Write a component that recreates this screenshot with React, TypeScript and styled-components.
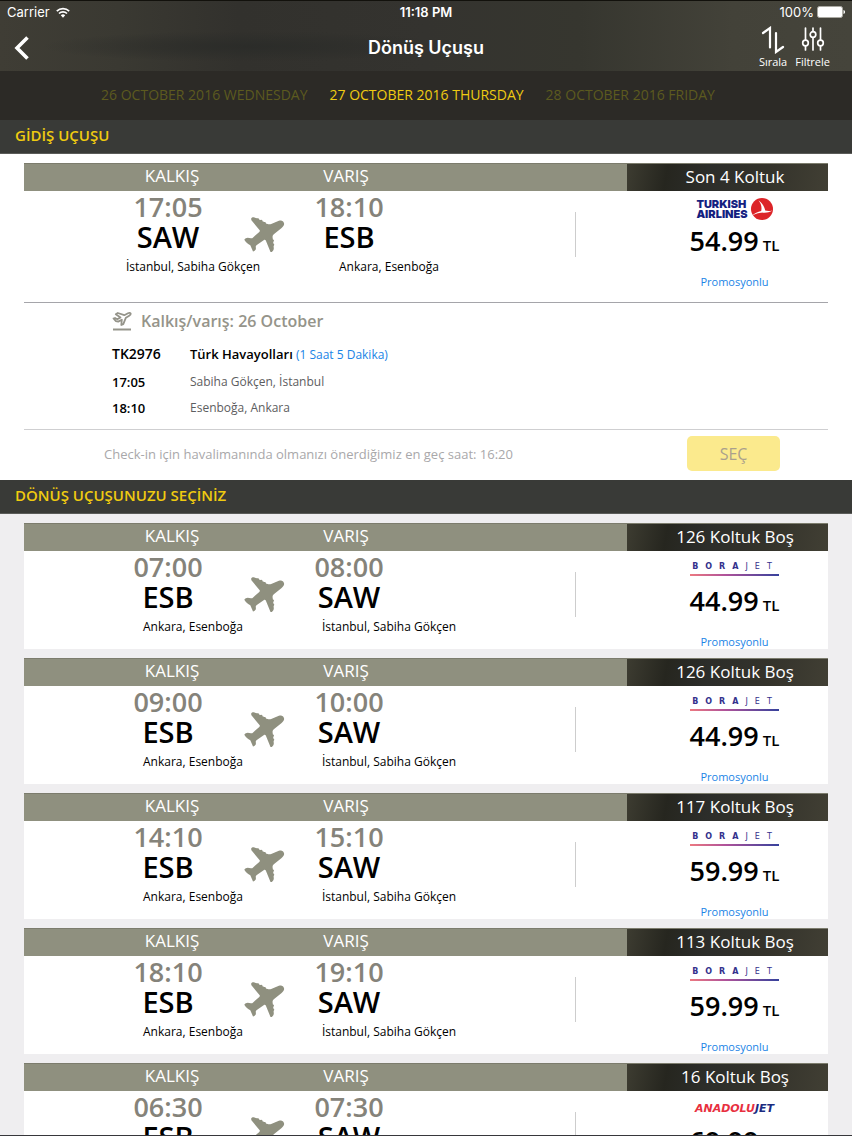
import React from 'react';
import styled, { createGlobalStyle } from 'styled-components';

const GlobalStyle = createGlobalStyle`
  *, *::before, *::after { box-sizing: border-box; }
  body {
    margin: 0;
    overflow: hidden;
    font-family: 'Open Sans', 'Noto Sans', sans-serif;
    font-size: 12px;
    line-height: 20px;
    color: #000;
  }
  button { font: inherit; color: inherit; border: 0; padding: 0; background: none; cursor: pointer; }
  h1, h2, h3, p, ul { margin: 0; padding: 0; font: inherit; }
  ul { list-style: none; }
  a { text-decoration: none; }
`;

const Screen = styled.div`
  display: flex;
  flex-direction: column;
  height: 100vh;
  background: #efeef0;
  border-bottom: 1px solid #37373b;
`;

const TopBar = styled.header`
  flex: none;
  height: 71px;
  color: #fff;
  border-top: 1px solid #12110c;
  background:
    radial-gradient(ellipse at 29% 65%, #2b2c29 0%, rgba(43, 44, 41, 0) 24%),
    linear-gradient(90deg, #3f3d35 0%, #3a3932 14%, #32312d 28%, #34332f 50%, #36362f 68%, #434239 86%, #45443b 100%);
`;

const StatusBar = styled.div`
  display: grid;
  grid-template-columns: 1fr auto 1fr;
  align-items: center;
  height: 22px;
  padding: 0 7px;
  font: 400 13px/22px Inter, sans-serif;
`;

const StatusGroup = styled.div<{ $end?: boolean }>`
  display: flex;
  align-items: center;
  justify-content: ${(p) => (p.$end ? 'flex-end' : 'flex-start')};
  gap: ${(p) => (p.$end ? 3 : 6)}px;
`;

const Clock = styled.div`
  font-weight: 600;
`;

const NavRow = styled.div`
  display: grid;
  grid-template-columns: 1fr auto 1fr;
  align-items: center;
  height: 48px;
  padding: 2px 14px 0;
`;

const BackButton = styled.button`
  justify-self: start;
  display: flex;
`;

const Title = styled.h1`
  font: 600 18px/24px Inter, sans-serif;
`;

const Tools = styled.div`
  justify-self: end;
  display: flex;
  gap: 8px;
  margin-right: 8px;
`;

const ToolButton = styled.button`
  display: flex;
  flex-direction: column;
  align-items: center;
  font-size: 11px;
  line-height: 16px;

  svg { height: 28px; }
`;

const DateTabs = styled.nav`
  flex: none;
  display: flex;
  justify-content: center;
  align-items: center;
  gap: 22px;
  height: 49px;
  padding: 0 36px 2px 0;
  background: #2c2a26;
`;

const DateTab = styled.button<{ $active?: boolean }>`
  font-size: 14px;
  white-space: nowrap;
  color: ${(p) => (p.$active ? '#efcb12' : '#5c5a1f')};
`;

const SectionTitle = styled.h2`
  flex: none;
  height: 34px;
  padding: 0 15px;
  font-size: 15px;
  font-weight: 600;
  line-height: 30px;
  color: #f0cb10;
  background: #393a37;
  border-bottom: 1px solid #5a5b58;
`;

const Selected = styled.section`
  flex: none;
  padding: 9px 24px 0;
  background: #fff;
`;

const List = styled.ul`
  flex: 1;
  min-height: 0;
  display: flex;
  flex-direction: column;
  gap: 9px;
  padding: 9px 24px;
  overflow-y: auto;
  scrollbar-width: none;
`;

const Card = styled.article`
  flex: none;
  background: #fff;
`;

const CardHeader = styled.div`
  display: grid;
  grid-template-columns: 3fr 1fr;
  height: 28px;
  line-height: 25px;
  color: #fff;
  background: #8f907f;
  border-top: 1px solid #7c7c6d;
`;

const Headings = styled.div`
  display: grid;
  grid-template-columns: 61fr 174fr 174fr 194fr;
  font-size: 17px;
  line-height: 24px;
  text-align: center;
`;

const Heading = styled.h3<{ $column: number }>`
  grid-column: ${(p) => p.$column};
`;

const Seats = styled.div`
  padding-left: 15px;
  font-size: 17px;
  text-align: center;
  background: linear-gradient(100deg, #3d3c31 0%, #26261f 20%, #2c2d2a 40%, #34332b 70%, #413f34 100%);
`;

const CardBody = styled.div<{ $tall?: boolean }>`
  display: grid;
  grid-template-columns: 551fr 253fr;
  height: ${(p) => (p.$tall ? 111 : 98)}px;
`;

const Route = styled.div``;

const TimesRow = styled.div`
  display: grid;
  grid-template-columns: 96fr 96fr 96fr 74fr 189fr;
  height: 62px;
  justify-items: center;
`;

const Stop = styled.div<{ $column: number }>`
  grid-column: ${(p) => p.$column};
  display: flex;
  flex-direction: column;
  align-items: center;
  white-space: nowrap;
`;

const Time = styled.time`
  font-size: 27px;
  font-weight: 600;
  line-height: 32px;
  color: #85837a;
`;

const Code = styled.strong`
  font-size: 29px;
  font-weight: 600;
  line-height: 28px;
`;

const PlaneCell = styled.div`
  grid-column: 3;
  align-self: end;
  display: flex;
`;

const CitiesRow = styled.div`
  display: grid;
  grid-template-columns: 71fr 196fr 196fr 88fr;
  padding-top: 4px;
  text-align: center;
`;

const City = styled.p<{ $column: number }>`
  grid-column: ${(p) => p.$column};
`;

const Fare = styled.div`
  display: flex;
  flex-direction: column;
  align-items: center;
  padding-left: 66px;
  background: linear-gradient(#cdcdcd, #cdcdcd) 0 21px / 1px 45px no-repeat;
`;

const Logo = styled.div`
  display: flex;
  align-items: center;
  justify-content: center;
  gap: 3px;
  height: 35px;
`;

const Price = styled.div`
  font-size: 27px;
  font-weight: 600;
  line-height: 30px;
  white-space: nowrap;
`;

const Currency = styled.span`
  margin-left: 4px;
  font-size: 15px;
`;

const FareLink = styled.a`
  margin-top: 14px;
  font-size: 11px;
  line-height: 16px;
  color: #1a84e6;
`;

const TurkishName = styled.span`
  font: 900 11px/10px Inter, sans-serif;
  color: #14217f;
`;

const BoraName = styled.span`
  padding: 0 0 3px 2px;
  font: 700 8px/9px 'DejaVu Sans', sans-serif;
  letter-spacing: 7px;
  color: #34318c;
  border-bottom: 2px solid;
  border-image: linear-gradient(90deg, #ee7a80, #b0539a 40%, #34419c) 1;
`;

const BoraLight = styled.span`
  font-weight: 400;
`;

const AnadoluName = styled.span`
  font: italic 700 11px/12px 'DejaVu Sans', sans-serif;
  color: #e8303f;
`;

const AnadoluJet = styled.span`
  color: #1b2b80;
`;

const Details = styled.div`
  padding: 6px 88px 8px;
  border-top: 1px solid #a5a5aa;
`;

const DetailsTitle = styled.h3`
  display: flex;
  align-items: center;
  gap: 8px;
  height: 24px;
  font-size: 16px;
  font-weight: 600;
  color: #95948a;
`;

const Legs = styled.dl`
  display: grid;
  grid-template-columns: 78px 1fr;
  grid-template-rows: 30px 26px 26px;
  align-items: center;
  margin: 6px 0 0;
`;

const Term = styled.dt<{ $large?: boolean }>`
  font-size: ${(p) => (p.$large ? 14 : 13)}px;
  font-weight: 600;
`;

const Info = styled.dd`
  margin: 0;
  color: #5d5d60;
`;

const Carrier = styled.strong`
  font-size: 13px;
  font-weight: 600;
  color: #000;
`;

const Duration = styled.span`
  color: #1a84e6;
`;

const CheckIn = styled.div`
  display: flex;
  align-items: center;
  justify-content: space-between;
  height: 51px;
  padding: 0 48px 3px 80px;
  font-size: 13px;
  color: #a9a8aa;
  border-top: 1px solid #cfcfd1;
`;

const SelectButton = styled.button`
  width: 93px;
  height: 35px;
  font-size: 16px;
  color: #aaa08c;
  background: #fbea8d;
  border-radius: 5px;
`;

const Plane = () => (
  <svg width="42" height="36" viewBox="0 0 42 36" fill="#8f907f" aria-hidden="true">
    <path d="M41 6.2c.6 1.600-.8 3.500-2.400 4.700l-7.800 6.300c-1.100 1-1.300 1.900-1.200 3.200l.3 2.200c.9.200 1.400.8.900 1.700l-.6.600.2 1.700c.8.400 1.100 1.100.6 1.800l-.4.500.2 2.700c0 1.600-1 2.700-2 3.400h-1.300l-4.700-11.500c-.4-.8-1.100-.9-1.800-.4l-7.200 4.800c-.9.700-1.100 1.100-1 2l.1 2.300c-.7 1.200-1.700 1.900-2.900 2.300l-2.700-6.200c-2.300-1.200-4.600-3-6-5.600 1-1.200 2.100-1.800 3.400-1.900l3.200.4c.9.100 1.300 0 2.200-.8l6.200-5.500c.7-.6.8-1.300.2-1.900L8.400 3.300l-.3-1.600C8.700.7 9.500.2 10.700.3l3.200 1 .9-.1c.8 0 1.200.5 1.200 1.200l1.600.5.8-.1c.9.100 1.100.6 1.100 1.400l1.800.8.700-.1c.8.200 1.100.8.900 1.600l2.500.7c1.200.3 1.800.2 2.800-.3l7.700-3.100c2-.8 4.500-.6 5.100 2.400z" />
  </svg>
);

const TakeOff = () => (
  <svg width="21" height="20" viewBox="0 0 21 20" fill="none" stroke="#95948a" strokeWidth="1.800" strokeLinejoin="round" strokeLinecap="round" aria-hidden="true">
    <path d="M1.500 7.500 3 7l2.300 1.300L8.500 6.500 3.800 3.300 5.800 2l6.500 2.200 3.700-2c1.300-.6 2.500-.3 2.700.4.200.8-.5 1.500-1.500 2.100l-3.300 2-2.600 6.400-2 .9.500-5.300-3.600 1.900-2.300-.5z" />
    <path d="M1 18.500h18" strokeWidth="2" strokeLinecap="butt" />
  </svg>
);

const Wifi = () => (
  <svg width="14" height="11" viewBox="0 0 14 11" fill="none" stroke="#fff" strokeWidth="1.700" aria-hidden="true">
    <path d="M.8 4.100a9 9 0 0 1 12.400 0M3 6.500a5.800 5.800 0 0 1 8 0" />
    <path d="M4.800 8.200a3.200 3.200 0 0 1 4.400 0L7 10.700z" fill="#fff" stroke="none" />
  </svg>
);

const Battery = () => (
  <svg width="28" height="12" viewBox="0 0 28 12" aria-hidden="true">
    <rect x=".5" y=".5" width="25" height="11" rx="2" fill="#fff" stroke="#aaa9a2" />
    <path d="M26.500 4v4c1-.3 1.500-1 1.500-2s-.5-1.700-1.500-2z" fill="#fff" />
  </svg>
);

const BackIcon = () => (
  <svg width="16" height="24" viewBox="0 0 16 24" fill="none" stroke="#fff" strokeWidth="3.600" aria-hidden="true">
    <path d="M13.500 1.500 3 12l10.500 10.500" />
  </svg>
);

const SortIcon = () => (
  <svg width="24" height="28" viewBox="0 0 24 28" fill="none" stroke="#fff" strokeWidth="2.200" strokeLinecap="round" aria-hidden="true">
    <path d="M2 7 9 2v19.500" />
    <path d="M15 7v19l7-5" />
  </svg>
);

const FilterIcon = () => (
  <svg width="24" height="28" viewBox="0 0 24 28" fill="none" stroke="#fff" strokeWidth="1.700" strokeLinecap="round" aria-hidden="true">
    <path d="M4.500 2v12M4.500 20v4M12 2v3.500M12 11.500V24M19.500 2v12M19.500 20v4" />
    <circle cx="4.500" cy="17" r="2.800" />
    <circle cx="12" cy="8.500" r="2.800" />
    <circle cx="19.500" cy="17" r="2.800" />
  </svg>
);

const TurkishMark = () => (
  <svg width="22" height="22" viewBox="0 0 22 22" aria-hidden="true">
    <circle cx="11" cy="11" r="11" fill="#dc2428" />
    <path d="M7.500 2.300c3.600 2.700 6 6.200 6.700 10.300 2.500.6 4.700.6 7-.2-1.200.9-3.200 1.700-5.400 2-5.200.4-10.200.6-14.600 3.200 2.300-2.500 5.600-3.900 9-4.700C11.100 9 10 5.600 7.500 2.300z" fill="#fff" />
  </svg>
);

type Airline = 'turkish' | 'bora' | 'anadolu';

const AirlineLogo = ({ airline }: { airline: Airline }) => (
  <Logo>
    {airline === 'turkish' && (
      <>
        <TurkishName>
          TURKISH
          <br />
          AIRLINES
        </TurkishName>
        <TurkishMark />
      </>
    )}
    {airline === 'bora' && (
      <BoraName>
        BORA<BoraLight>JET</BoraLight>
      </BoraName>
    )}
    {airline === 'anadolu' && (
      <AnadoluName>
        ANADOLU<AnadoluJet>JET</AnadoluJet>
      </AnadoluName>
    )}
  </Logo>
);

const cities: Record<string, string> = {
  SAW: 'İstanbul, Sabiha Gökçen',
  ESB: 'Ankara, Esenboğa',
};

interface Flight {
  from: string;
  to: string;
  departs: string;
  arrives: string;
  seats: string;
  price: string;
  airline: Airline;
}

const outbound: Flight = { from: 'SAW', to: 'ESB', departs: '17:05', arrives: '18:10', seats: 'Son 4 Koltuk', price: '54.99', airline: 'turkish' };

const returns: Flight[] = [
  { from: 'ESB', to: 'SAW', departs: '07:00', arrives: '08:00', seats: '126 Koltuk Boş', price: '44.99', airline: 'bora' },
  { from: 'ESB', to: 'SAW', departs: '09:00', arrives: '10:00', seats: '126 Koltuk Boş', price: '44.99', airline: 'bora' },
  { from: 'ESB', to: 'SAW', departs: '14:10', arrives: '15:10', seats: '117 Koltuk Boş', price: '59.99', airline: 'bora' },
  { from: 'ESB', to: 'SAW', departs: '18:10', arrives: '19:10', seats: '113 Koltuk Boş', price: '59.99', airline: 'bora' },
  { from: 'ESB', to: 'SAW', departs: '06:30', arrives: '07:30', seats: '16 Koltuk Boş', price: '69.99', airline: 'anadolu' },
];

const FlightCard = ({ flight, children }: { flight: Flight; children?: React.ReactNode }) => (
  <Card>
    <CardHeader>
      <Headings>
        <Heading $column={2}>KALKIŞ</Heading>
        <Heading $column={3}>VARIŞ</Heading>
      </Headings>
      <Seats>{flight.seats}</Seats>
    </CardHeader>
    <CardBody $tall={Boolean(children)}>
      <Route>
        <TimesRow>
          <Stop $column={2}>
            <Time>{flight.departs}</Time>
            <Code>{flight.from}</Code>
          </Stop>
          <PlaneCell>
            <Plane />
          </PlaneCell>
          <Stop $column={4}>
            <Time>{flight.arrives}</Time>
            <Code>{flight.to}</Code>
          </Stop>
        </TimesRow>
        <CitiesRow>
          <City $column={2}>{cities[flight.from]}</City>
          <City $column={3}>{cities[flight.to]}</City>
        </CitiesRow>
      </Route>
      <Fare>
        <AirlineLogo airline={flight.airline} />
        <Price>
          {flight.price}
          <Currency>TL</Currency>
        </Price>
        <FareLink href="#fare">Promosyonlu</FareLink>
      </Fare>
    </CardBody>
    {children}
  </Card>
);

export default function App() {
  return (
    <>
      <GlobalStyle />
      <Screen>
        <TopBar>
          <StatusBar>
            <StatusGroup>
              Carrier
              <Wifi />
            </StatusGroup>
            <Clock>11:18 PM</Clock>
            <StatusGroup $end>
              100%
              <Battery />
            </StatusGroup>
          </StatusBar>
          <NavRow>
            <BackButton aria-label="Geri">
              <BackIcon />
            </BackButton>
            <Title>Dönüş Uçuşu</Title>
            <Tools>
              <ToolButton>
                <SortIcon />
                Sırala
              </ToolButton>
              <ToolButton>
                <FilterIcon />
                Filtrele
              </ToolButton>
            </Tools>
          </NavRow>
        </TopBar>
        <DateTabs>
          <DateTab>26 OCTOBER 2016 WEDNESDAY</DateTab>
          <DateTab $active>27 OCTOBER 2016 THURSDAY</DateTab>
          <DateTab>28 OCTOBER 2016 FRIDAY</DateTab>
        </DateTabs>
        <SectionTitle>GİDİŞ UÇUŞU</SectionTitle>
        <Selected>
          <FlightCard flight={outbound}>
            <Details>
              <DetailsTitle>
                <TakeOff />
                Kalkış/varış: 26 October
              </DetailsTitle>
              <Legs>
                <Term $large>TK2976</Term>
                <Info>
                  <Carrier>Türk Havayolları</Carrier> <Duration>(1 Saat 5 Dakika)</Duration>
                </Info>
                <Term>17:05</Term>
                <Info>Sabiha Gökçen, İstanbul</Info>
                <Term>18:10</Term>
                <Info>Esenboğa, Ankara</Info>
              </Legs>
            </Details>
            <CheckIn>
              <p>Check-in için havalimanında olmanızı önerdiğimiz en geç saat: 16:20</p>
              <SelectButton>SEÇ</SelectButton>
            </CheckIn>
          </FlightCard>
        </Selected>
        <SectionTitle>DÖNÜŞ UÇUŞUNUZU SEÇİNİZ</SectionTitle>
        <List>
          {returns.map((flight) => (
            <li key={flight.departs}>
              <FlightCard flight={flight} />
            </li>
          ))}
        </List>
      </Screen>
    </>
  );
}
